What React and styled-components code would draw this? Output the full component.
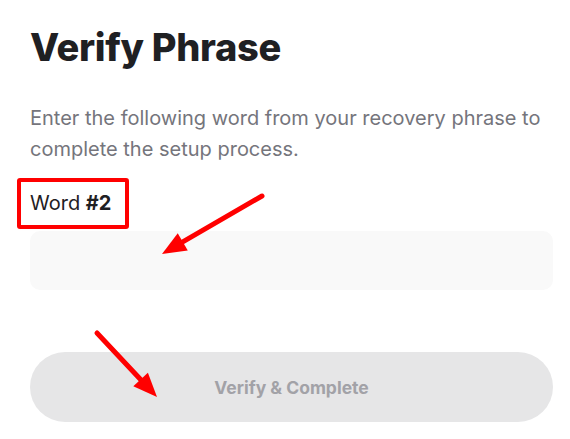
import React from 'react';
import styled, { createGlobalStyle } from 'styled-components';

const GlobalStyle = createGlobalStyle`
    body {
        margin: 0;
        background: #ffffff;
        font-family: Inter, "Noto Sans", sans-serif;
    }
`;

const Page = styled.div`
    position: relative;
    width: 570px;
    height: 439px;
    padding: 24px 17px 0 30px;
    box-sizing: border-box;
    overflow: hidden;
`;

const Title = styled.h1`
    margin: 0;
    font-size: 38px;
    line-height: 46px;
    font-weight: 800;
    letter-spacing: -0.3px;
    color: #1f2023;
`;

const Description = styled.p`
    margin: 33px 0 0;
    font-size: 20px;
    line-height: 31px;
    color: #75757c;
`;

const Label = styled.div`
    display: inline-block;
    margin: 13px 0 0 -13px;
    padding: 8px 14px 8px 9px;
    border: 4px solid #ff0000;
    border-radius: 3px;
    font-size: 20px;
    line-height: 27px;
    color: #1f2023;

    b {
        font-weight: 700;
    }
`;

const WordInput = styled.div`
    margin-top: 2px;
    height: 59px;
    border-radius: 10px;
    background: #f9f9f9;
`;

const Button = styled.button`
    display: block;
    width: 100%;
    height: 70px;
    margin-top: 62px;
    border: none;
    border-radius: 35px;
    background: #e6e6e7;
    font-family: Inter, "Noto Sans", sans-serif;
    font-size: 17.5px;
    font-weight: 700;
    color: #a2a2a7;
`;

const Overlay = styled.svg`
    position: absolute;
    left: 0;
    top: 0;
    pointer-events: none;
`;

function Arrow({ x1, y1, x2, y2 }) {
    const angle = Math.atan2(y2 - y1, x2 - x1);
    const len = 24;
    const half = 10;
    const bx = x2 - Math.cos(angle) * len;
    const by = y2 - Math.sin(angle) * len;
    const px = -Math.sin(angle) * half;
    const py = Math.cos(angle) * half;
    return (
        <g>
            <line x1={x1} y1={y1} x2={bx} y2={by} stroke="#ff0000" strokeWidth="5" strokeLinecap="round" />
            <polygon points={`${x2},${y2} ${bx + px},${by + py} ${bx - px},${by - py}`} fill="#ff0000" />
        </g>
    );
}

export default function App() {
    return (
        <Page>
            <GlobalStyle />
            <Title>Verify Phrase</Title>
            <Description>
                Enter the following word from your recovery phrase to complete the setup process.
            </Description>
            <Label>Word <b>#2</b></Label>
            <WordInput />
            <Button>Verify &amp; Complete</Button>
            <Overlay width="570" height="439">
                <Arrow x1={262} y1={196} x2={162} y2={254} />
                <Arrow x1={97} y1={333} x2={157} y2={397} />
            </Overlay>
        </Page>
    );
}
